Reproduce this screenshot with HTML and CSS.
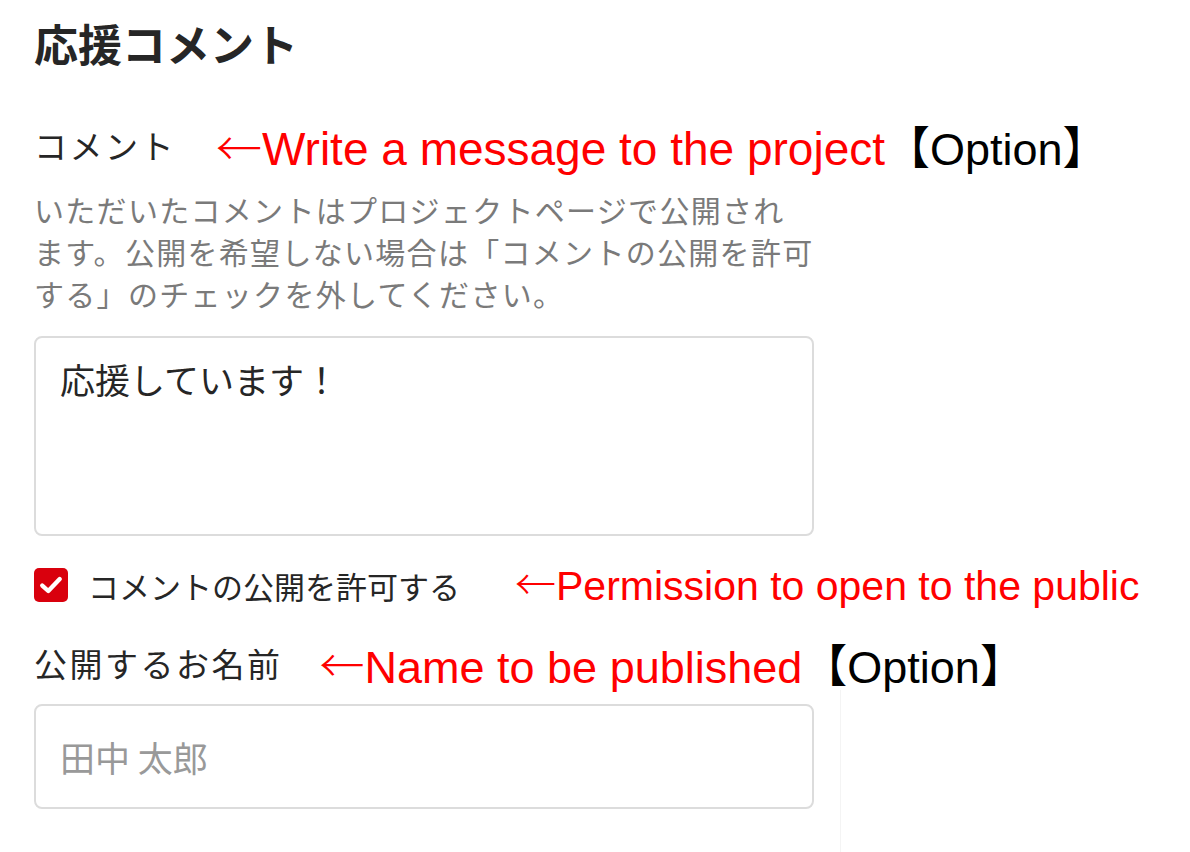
FILE: index.html
```html
<!DOCTYPE html>
<html lang="ja">
<head>
<meta charset="utf-8">
<title>応援コメント</title>
<link rel="stylesheet" href="styles.css">
</head>
<body>
<div class="page">
  <h2 class="title">応援コメント</h2>

  <div class="field-head">
    <span class="label">コメント</span>
    <span class="note"><span class="arrow">←</span>Write a message to the project<span class="opt">【Option】</span></span>
  </div>
  <p class="help">いただいたコメントはプロジェクトページで公開され<br>ます。公開を希望しない場合は「コメントの公開を許可<br>する」のチェックを外してください。</p>
  <div class="textbox">応援しています！</div>

  <div class="check-row">
    <span class="checkbox">
      <svg width="22" height="18" viewBox="0 0 22 18"><path d="M3 9.5 L8.5 14.5 L19 3.5" fill="none" stroke="#fff" stroke-width="4" stroke-linecap="round" stroke-linejoin="round"/></svg>
    </span>
    <span class="check-label">コメントの公開を許可する</span>
    <span class="note note-check"><span class="arrow">←</span>Permission to open to the public</span>
  </div>

  <div class="field-head name-head">
    <span class="label">公開するお名前</span>
    <span class="note note-name"><span class="arrow">←</span>Name to be published<span class="opt">【Option】</span></span>
  </div>
  <div class="inputbox">田中 太郎</div>
</div>
<div class="edge"></div>
</body>
</html>
```

FILE: styles.css
```css
body {
  margin: 0;
  background: #fff;
  font-family: "Noto Sans CJK JP", "Liberation Sans", sans-serif;
  color: #262626;
}
.page {
  padding: 15px 0 0 34px;
  width: 780px;
}
.title {
  margin: 0;
  font-size: 44px;
  line-height: 56px;
  font-weight: bold;
  color: #262626;
}
.field-head {
  display: flex;
  align-items: center;
  margin-top: 50px;
  height: 48px;
  white-space: nowrap;
}
.label {
  font-size: 33px;
  letter-spacing: 2.5px;
  color: #262626;
}
.note {
  font-family: "Liberation Sans", sans-serif;
  font-size: 46px;
  color: #ff0000;
  margin-left: 40px;
}
.arrow {
  font-family: "Noto Sans CJK JP", sans-serif;
  font-weight: 300;
}
.opt {
  color: #000;
  font-size: 45px;
  font-family: "Liberation Sans", "Noto Sans CJK JP", sans-serif;
}
.help {
  margin: 19px 0 0 0;
  white-space: nowrap;
  font-size: 30px;
  letter-spacing: 1.3px;
  line-height: 42px;
  color: #7a7a7a;
}
.textbox {
  margin-top: 22px;
  height: 200px;
  border: 2px solid #dcdcdc;
  border-radius: 8px;
  padding: 20px 24px;
  box-sizing: border-box;
  font-size: 35px;
  line-height: 42px;
  color: #262626;
}
.check-row {
  display: flex;
  align-items: center;
  margin-top: 29px;
  height: 40px;
  white-space: nowrap;
}
.checkbox {
  width: 34px;
  height: 34px;
  border-radius: 5px;
  background: #d9000d;
  display: flex;
  align-items: center;
  justify-content: center;
  flex-shrink: 0;
}
.checkbox svg {
  width: 24px;
  height: 20px;
}
.check-label {
  margin-left: 20px;
  font-size: 31px;
  color: #262626;
}
.note-check {
  font-size: 41px;
  margin-left: 55px;
  position: relative;
  top: -3px;
}
.name-head {
  margin-top: 34px;
}
.note-name {
  font-size: 45px;
  margin-left: 37px;
}
.inputbox {
  margin-top: 17px;
  height: 105px;
  border: 2px solid #dcdcdc;
  border-radius: 8px;
  padding: 0 24px;
  box-sizing: border-box;
  display: flex;
  align-items: center;
  font-size: 35px;
  color: #999;
}
.edge {
  position: absolute;
  left: 840px;
  top: 690px;
  width: 1px;
  height: 162px;
  background: #f4f4f4;
}
```
